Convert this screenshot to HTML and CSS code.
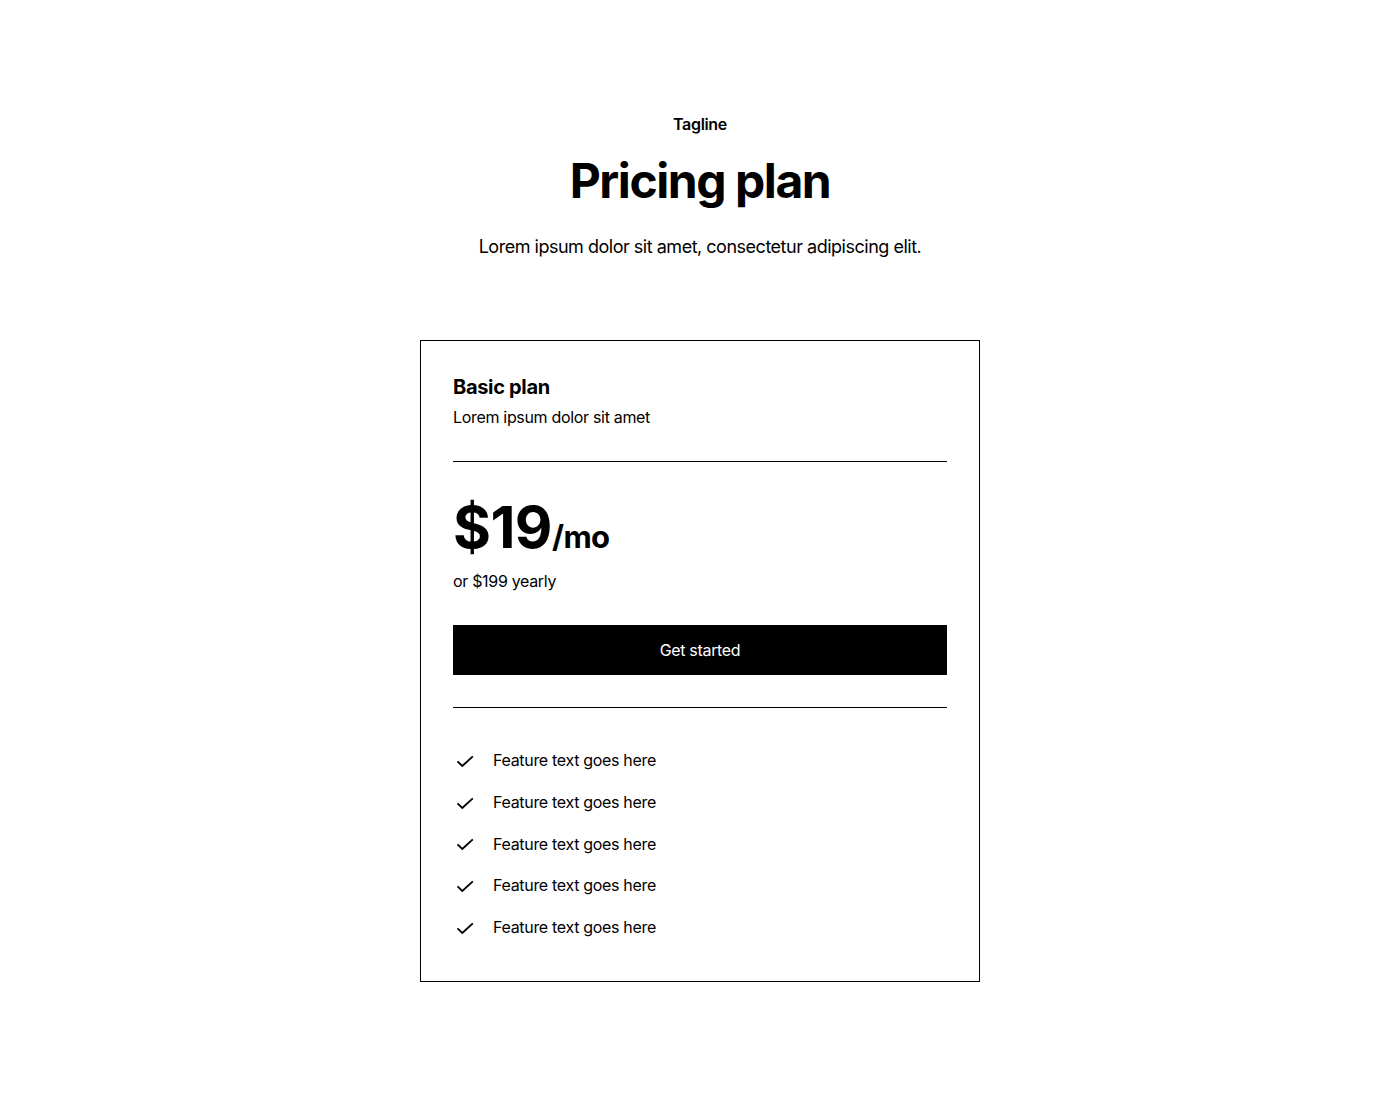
FILE: index.html
```html
<!DOCTYPE html>
<html lang="en">
<head>
    <meta charset="UTF-8">
    <meta name="viewport" content="width=device-width, initial-scale=1.0">
    <title>Pricing plan</title>
    <link rel="stylesheet" href="styles.css">
</head>
<body>
<section class="pricing">
    <div class="pricing-header">
        <p class="tagline">Tagline</p>
        <h2>Pricing plan</h2>
        <p class="intro">Lorem ipsum dolor sit amet, consectetur adipiscing elit.</p>
    </div>

    <div class="plan-card">
        <h3>Basic plan</h3>
        <p>Lorem ipsum dolor sit amet</p>

        <div class="divider"></div>

        <div class="price">$19<span>/mo</span></div>
        <p>or $199 yearly</p>

        <a href="#" class="cta">Get started</a>

        <div class="divider"></div>

        <!-- Features -->
        <ul class="features">
            <li><svg viewBox="0 0 24 24"><path d="M4.5 12.4 L9.3 17 L19.8 7.4"/></svg>Feature text goes here</li>
            <li><svg viewBox="0 0 24 24"><path d="M4.5 12.4 L9.3 17 L19.8 7.4"/></svg>Feature text goes here</li>
            <li><svg viewBox="0 0 24 24"><path d="M4.5 12.4 L9.3 17 L19.8 7.4"/></svg>Feature text goes here</li>
            <li><svg viewBox="0 0 24 24"><path d="M4.5 12.4 L9.3 17 L19.8 7.4"/></svg>Feature text goes here</li>
            <li><svg viewBox="0 0 24 24"><path d="M4.5 12.4 L9.3 17 L19.8 7.4"/></svg>Feature text goes here</li>
        </ul>
    </div>
</section>
</body>
</html>
```

FILE: styles.css
```css
body {
    font-family: Inter, "Noto Sans", sans-serif;
    background-color: white;
    color: black;
    margin: 0;
    padding: 0;
    letter-spacing: -0.02em;
}
p {
    margin: 0;
}
.pricing {
    padding: 112px 64px;
}
.pricing-header {
    max-width: 768px;
    margin: 0 auto 80px;
    text-align: center;
}
.tagline {
    font-size: 16px;
    font-weight: 600;
    line-height: 24px;
    margin-bottom: 16px;
}
.pricing-header h2 {
    font-size: 48px;
    font-weight: 700;
    line-height: 57px;
    letter-spacing: -0.03em;
    margin: 0 0 24px;
}
.intro {
    font-size: 18px;
    line-height: 27px;
    letter-spacing: -0.027em;
}
/* Plan card */
.plan-card {
    max-width: 560px;
    margin: 0 auto;
    box-sizing: border-box;
    border: 1px solid black;
    padding: 32px;
    font-size: 16px;
    line-height: 24px;
}
.plan-card h3 {
    font-size: 20px;
    font-weight: 700;
    line-height: 28px;
    margin: 0 0 4px;
}
.divider {
    border-top: 1px solid black;
    margin: 32px 0;
}
.price {
    font-size: 58px;
    font-weight: 700;
    line-height: 67px;
    letter-spacing: -0.01em;
    margin-bottom: 8px;
}
.price span {
    font-size: 31px;
    line-height: 1;
}
.cta {
    display: block;
    margin-top: 32px;
    padding: 12px 24px;
    border: 1px solid black;
    background-color: black;
    color: white;
    text-align: center;
    text-decoration: none;
}
.features {
    list-style: none;
    margin: 0;
    padding: 8px 0;
    display: flex;
    flex-direction: column;
    gap: 16.2px;
}
.features li {
    display: flex;
    align-items: center;
    gap: 16px;
    line-height: 25.6px;
}
.features svg {
    width: 24px;
    height: 24px;
    flex-shrink: 0;
    fill: none;
    stroke: black;
    stroke-width: 1.9;
}
```
